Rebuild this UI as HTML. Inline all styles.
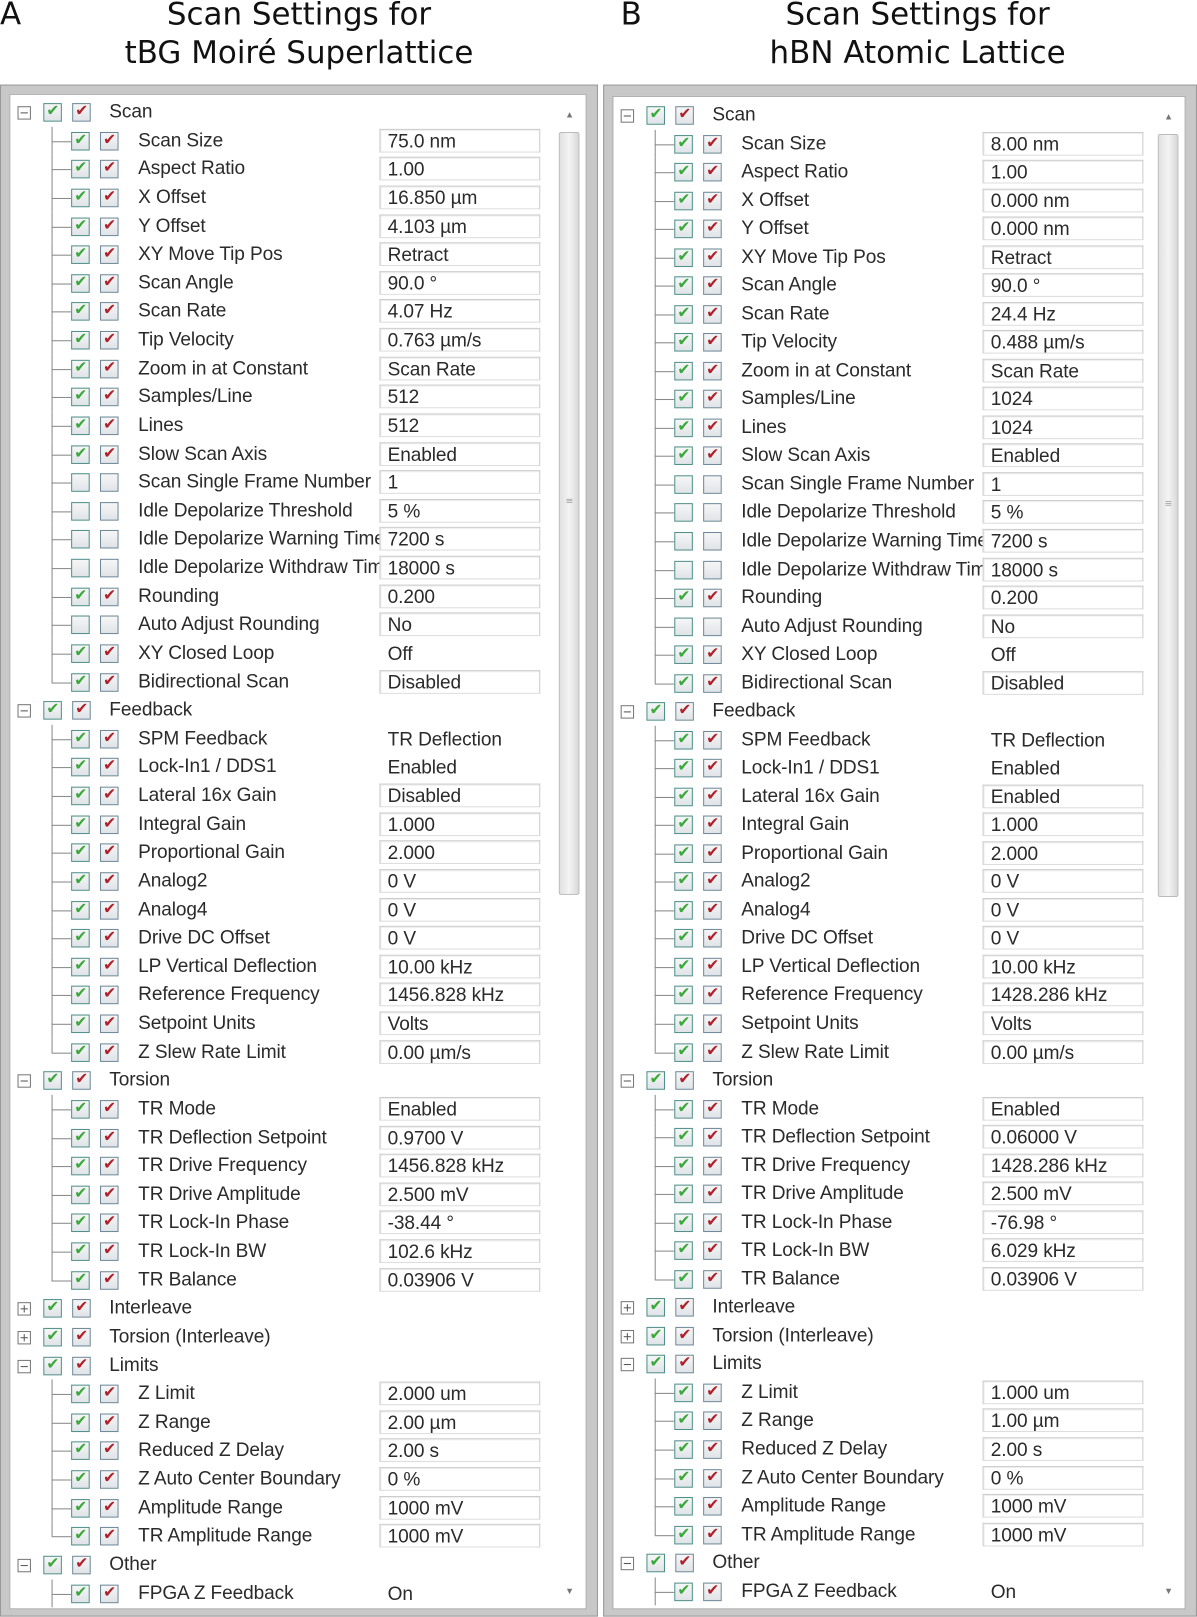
<!DOCTYPE html>
<html><head><meta charset="utf-8"><style>
*{margin:0;padding:0;box-sizing:border-box}
body{width:1197px;height:1616px;background:#fff;overflow:hidden;position:relative}
#w{position:absolute;left:0;top:0;width:1161px;height:1568px;transform:scale(1.031);transform-origin:0 0}
.h{position:absolute;font-family:"DejaVu Sans",sans-serif;font-size:30px;color:#111;text-align:center;line-height:37px}
.p{position:absolute;top:82px;height:1486px;background:#c8c8c8;border:1px solid #999}
.in{position:absolute;left:8px;top:8px;right:10px;bottom:6px;background:#fff;border:1px solid #aaa;overflow:hidden}
.sb{position:absolute;right:4px;top:8px;width:24px;bottom:8px}
.th{position:absolute;left:2px;right:2px;top:28px;height:740px;background:linear-gradient(90deg,#e0e0e0,#f4f4f4,#d8d8d8);border:1px solid #bbb;border-radius:2px}
.th::after{content:"≡";position:absolute;left:6px;top:350px;font-size:12px;color:#888}
.ar{position:absolute;left:8px;font-size:9px;color:#777}
.rows{position:absolute;left:0;top:3px;width:100%}
.r{position:relative;height:27.63px;font-family:"Liberation Sans",sans-serif;font-size:18.5px;letter-spacing:-0.1px;color:#2a2a2a;white-space:nowrap}
.B .r{height:27.54px}
.r b{position:absolute;top:5px;width:18px;height:18px;border:1px solid #6f8898;background:linear-gradient(#f6f6f6,#e0e4e8)}
.r b.on::after{content:"✔";position:absolute;left:2px;top:-3px;font-size:15px;font-weight:bold;font-family:"DejaVu Sans",sans-serif;letter-spacing:0}
.r b.g{border-color:#4f8f8a}
.r b.g.on::after{color:#3aa83a}.r b.k.on::after{color:#b0202a}
.r span{position:absolute;top:2px;overflow:hidden}
.g0 .x{position:absolute;left:7px;top:8px;width:13px;height:13px;border:1px solid #777;font-size:0}
.g0 .x::before{content:"";position:absolute;left:2px;right:2px;top:5px;height:1px;background:#555}
.g0 .x.pl::after{content:"";position:absolute;top:2px;bottom:2px;left:5px;width:1px;background:#555}
.g0 .g{left:32px}.g0 .k{left:60px}.g0 span{left:96px}
.c .g{left:59px}.c .k{left:87px}.c span{left:124px;width:234px}
.c::before{content:"";position:absolute;left:40px;top:0;height:100%;border-left:1px solid #888}
.c.l::before{height:14px}
.c::after{content:"";position:absolute;left:40px;top:14px;width:19px;border-top:1px solid #888}
.c em{position:absolute;left:358px;top:2px;width:156px;height:23px;border:1px solid #ccc;border-bottom-color:#ddd;font-style:normal;padding-left:7px;line-height:21px;box-shadow:inset 1px 1px 0 #eee}
.c em.n{border-color:transparent;box-shadow:none}
</style></head><body><div id="w">
<div class="h" style="left:0;top:-4px;text-align:left">A</div>
<div class="h" style="left:40px;top:-4px;width:500px">Scan Settings for<br>tBG Moiré Superlattice</div>
<div class="h" style="left:602px;top:-4px;text-align:left">B</div>
<div class="h" style="left:640px;top:-4px;width:500px">Scan Settings for<br>hBN Atomic Lattice</div>

<div class="p" style="left:0;width:580px"><div class="in">
<div class="rows">
<div class="r g0"><i class="x"></i><b class="g on"></b><b class="k on"></b><span>Scan</span></div>
<div class="r c"><b class="g on"></b><b class="k on"></b><span>Scan Size</span><em>75.0 nm</em></div>
<div class="r c"><b class="g on"></b><b class="k on"></b><span>Aspect Ratio</span><em>1.00</em></div>
<div class="r c"><b class="g on"></b><b class="k on"></b><span>X Offset</span><em>16.850 µm</em></div>
<div class="r c"><b class="g on"></b><b class="k on"></b><span>Y Offset</span><em>4.103 µm</em></div>
<div class="r c"><b class="g on"></b><b class="k on"></b><span>XY Move Tip Pos</span><em>Retract</em></div>
<div class="r c"><b class="g on"></b><b class="k on"></b><span>Scan Angle</span><em>90.0 °</em></div>
<div class="r c"><b class="g on"></b><b class="k on"></b><span>Scan Rate</span><em>4.07 Hz</em></div>
<div class="r c"><b class="g on"></b><b class="k on"></b><span>Tip Velocity</span><em>0.763 µm/s</em></div>
<div class="r c"><b class="g on"></b><b class="k on"></b><span>Zoom in at Constant</span><em>Scan Rate</em></div>
<div class="r c"><b class="g on"></b><b class="k on"></b><span>Samples/Line</span><em>512</em></div>
<div class="r c"><b class="g on"></b><b class="k on"></b><span>Lines</span><em>512</em></div>
<div class="r c"><b class="g on"></b><b class="k on"></b><span>Slow Scan Axis</span><em>Enabled</em></div>
<div class="r c"><b class="g"></b><b class="k"></b><span>Scan Single Frame Number</span><em>1</em></div>
<div class="r c"><b class="g"></b><b class="k"></b><span>Idle Depolarize Threshold</span><em>5 %</em></div>
<div class="r c"><b class="g"></b><b class="k"></b><span>Idle Depolarize Warning Time</span><em>7200 s</em></div>
<div class="r c"><b class="g"></b><b class="k"></b><span>Idle Depolarize Withdraw Time</span><em>18000 s</em></div>
<div class="r c"><b class="g on"></b><b class="k on"></b><span>Rounding</span><em>0.200</em></div>
<div class="r c"><b class="g"></b><b class="k"></b><span>Auto Adjust Rounding</span><em>No</em></div>
<div class="r c"><b class="g on"></b><b class="k on"></b><span>XY Closed Loop</span><em class="n">Off</em></div>
<div class="r c l"><b class="g on"></b><b class="k on"></b><span>Bidirectional Scan</span><em>Disabled</em></div>
<div class="r g0"><i class="x"></i><b class="g on"></b><b class="k on"></b><span>Feedback</span></div>
<div class="r c"><b class="g on"></b><b class="k on"></b><span>SPM Feedback</span><em class="n">TR Deflection</em></div>
<div class="r c"><b class="g on"></b><b class="k on"></b><span>Lock-In1 / DDS1</span><em class="n">Enabled</em></div>
<div class="r c"><b class="g on"></b><b class="k on"></b><span>Lateral 16x Gain</span><em>Disabled</em></div>
<div class="r c"><b class="g on"></b><b class="k on"></b><span>Integral Gain</span><em>1.000</em></div>
<div class="r c"><b class="g on"></b><b class="k on"></b><span>Proportional Gain</span><em>2.000</em></div>
<div class="r c"><b class="g on"></b><b class="k on"></b><span>Analog2</span><em>0 V</em></div>
<div class="r c"><b class="g on"></b><b class="k on"></b><span>Analog4</span><em>0 V</em></div>
<div class="r c"><b class="g on"></b><b class="k on"></b><span>Drive DC Offset</span><em>0 V</em></div>
<div class="r c"><b class="g on"></b><b class="k on"></b><span>LP Vertical Deflection</span><em>10.00 kHz</em></div>
<div class="r c"><b class="g on"></b><b class="k on"></b><span>Reference Frequency</span><em>1456.828 kHz</em></div>
<div class="r c"><b class="g on"></b><b class="k on"></b><span>Setpoint Units</span><em>Volts</em></div>
<div class="r c l"><b class="g on"></b><b class="k on"></b><span>Z Slew Rate Limit</span><em>0.00 µm/s</em></div>
<div class="r g0"><i class="x"></i><b class="g on"></b><b class="k on"></b><span>Torsion</span></div>
<div class="r c"><b class="g on"></b><b class="k on"></b><span>TR Mode</span><em>Enabled</em></div>
<div class="r c"><b class="g on"></b><b class="k on"></b><span>TR Deflection Setpoint</span><em>0.9700 V</em></div>
<div class="r c"><b class="g on"></b><b class="k on"></b><span>TR Drive Frequency</span><em>1456.828 kHz</em></div>
<div class="r c"><b class="g on"></b><b class="k on"></b><span>TR Drive Amplitude</span><em>2.500 mV</em></div>
<div class="r c"><b class="g on"></b><b class="k on"></b><span>TR Lock-In Phase</span><em>-38.44 °</em></div>
<div class="r c"><b class="g on"></b><b class="k on"></b><span>TR Lock-In BW</span><em>102.6 kHz</em></div>
<div class="r c l"><b class="g on"></b><b class="k on"></b><span>TR Balance</span><em>0.03906 V</em></div>
<div class="r g0"><i class="x pl"></i><b class="g on"></b><b class="k on"></b><span>Interleave</span></div>
<div class="r g0"><i class="x pl"></i><b class="g on"></b><b class="k on"></b><span>Torsion (Interleave)</span></div>
<div class="r g0"><i class="x"></i><b class="g on"></b><b class="k on"></b><span>Limits</span></div>
<div class="r c"><b class="g on"></b><b class="k on"></b><span>Z Limit</span><em>2.000 um</em></div>
<div class="r c"><b class="g on"></b><b class="k on"></b><span>Z Range</span><em>2.00 µm</em></div>
<div class="r c"><b class="g on"></b><b class="k on"></b><span>Reduced Z Delay</span><em>2.00 s</em></div>
<div class="r c"><b class="g on"></b><b class="k on"></b><span>Z Auto Center Boundary</span><em>0 %</em></div>
<div class="r c"><b class="g on"></b><b class="k on"></b><span>Amplitude Range</span><em>1000 mV</em></div>
<div class="r c l"><b class="g on"></b><b class="k on"></b><span>TR Amplitude Range</span><em>1000 mV</em></div>
<div class="r g0"><i class="x"></i><b class="g on"></b><b class="k on"></b><span>Other</span></div>
<div class="r c"><b class="g on"></b><b class="k on"></b><span>FPGA Z Feedback</span><em class="n">On</em></div>
</div>
<div class="sb"><div class="ar" style="top:6px">▲</div><div class="th"></div><div class="ar" style="bottom:4px">▼</div></div>
</div></div>

<div class="p B" style="left:585px;width:576px"><div class="in" style="top:10px">
<div class="rows" style="top:4px">
<div class="r g0"><i class="x"></i><b class="g on"></b><b class="k on"></b><span>Scan</span></div>
<div class="r c"><b class="g on"></b><b class="k on"></b><span>Scan Size</span><em>8.00 nm</em></div>
<div class="r c"><b class="g on"></b><b class="k on"></b><span>Aspect Ratio</span><em>1.00</em></div>
<div class="r c"><b class="g on"></b><b class="k on"></b><span>X Offset</span><em>0.000 nm</em></div>
<div class="r c"><b class="g on"></b><b class="k on"></b><span>Y Offset</span><em>0.000 nm</em></div>
<div class="r c"><b class="g on"></b><b class="k on"></b><span>XY Move Tip Pos</span><em>Retract</em></div>
<div class="r c"><b class="g on"></b><b class="k on"></b><span>Scan Angle</span><em>90.0 °</em></div>
<div class="r c"><b class="g on"></b><b class="k on"></b><span>Scan Rate</span><em>24.4 Hz</em></div>
<div class="r c"><b class="g on"></b><b class="k on"></b><span>Tip Velocity</span><em>0.488 µm/s</em></div>
<div class="r c"><b class="g on"></b><b class="k on"></b><span>Zoom in at Constant</span><em>Scan Rate</em></div>
<div class="r c"><b class="g on"></b><b class="k on"></b><span>Samples/Line</span><em>1024</em></div>
<div class="r c"><b class="g on"></b><b class="k on"></b><span>Lines</span><em>1024</em></div>
<div class="r c"><b class="g on"></b><b class="k on"></b><span>Slow Scan Axis</span><em>Enabled</em></div>
<div class="r c"><b class="g"></b><b class="k"></b><span>Scan Single Frame Number</span><em>1</em></div>
<div class="r c"><b class="g"></b><b class="k"></b><span>Idle Depolarize Threshold</span><em>5 %</em></div>
<div class="r c"><b class="g"></b><b class="k"></b><span>Idle Depolarize Warning Time</span><em>7200 s</em></div>
<div class="r c"><b class="g"></b><b class="k"></b><span>Idle Depolarize Withdraw Time</span><em>18000 s</em></div>
<div class="r c"><b class="g on"></b><b class="k on"></b><span>Rounding</span><em>0.200</em></div>
<div class="r c"><b class="g"></b><b class="k"></b><span>Auto Adjust Rounding</span><em>No</em></div>
<div class="r c"><b class="g on"></b><b class="k on"></b><span>XY Closed Loop</span><em class="n">Off</em></div>
<div class="r c l"><b class="g on"></b><b class="k on"></b><span>Bidirectional Scan</span><em>Disabled</em></div>
<div class="r g0"><i class="x"></i><b class="g on"></b><b class="k on"></b><span>Feedback</span></div>
<div class="r c"><b class="g on"></b><b class="k on"></b><span>SPM Feedback</span><em class="n">TR Deflection</em></div>
<div class="r c"><b class="g on"></b><b class="k on"></b><span>Lock-In1 / DDS1</span><em class="n">Enabled</em></div>
<div class="r c"><b class="g on"></b><b class="k on"></b><span>Lateral 16x Gain</span><em>Enabled</em></div>
<div class="r c"><b class="g on"></b><b class="k on"></b><span>Integral Gain</span><em>1.000</em></div>
<div class="r c"><b class="g on"></b><b class="k on"></b><span>Proportional Gain</span><em>2.000</em></div>
<div class="r c"><b class="g on"></b><b class="k on"></b><span>Analog2</span><em>0 V</em></div>
<div class="r c"><b class="g on"></b><b class="k on"></b><span>Analog4</span><em>0 V</em></div>
<div class="r c"><b class="g on"></b><b class="k on"></b><span>Drive DC Offset</span><em>0 V</em></div>
<div class="r c"><b class="g on"></b><b class="k on"></b><span>LP Vertical Deflection</span><em>10.00 kHz</em></div>
<div class="r c"><b class="g on"></b><b class="k on"></b><span>Reference Frequency</span><em>1428.286 kHz</em></div>
<div class="r c"><b class="g on"></b><b class="k on"></b><span>Setpoint Units</span><em>Volts</em></div>
<div class="r c l"><b class="g on"></b><b class="k on"></b><span>Z Slew Rate Limit</span><em>0.00 µm/s</em></div>
<div class="r g0"><i class="x"></i><b class="g on"></b><b class="k on"></b><span>Torsion</span></div>
<div class="r c"><b class="g on"></b><b class="k on"></b><span>TR Mode</span><em>Enabled</em></div>
<div class="r c"><b class="g on"></b><b class="k on"></b><span>TR Deflection Setpoint</span><em>0.06000 V</em></div>
<div class="r c"><b class="g on"></b><b class="k on"></b><span>TR Drive Frequency</span><em>1428.286 kHz</em></div>
<div class="r c"><b class="g on"></b><b class="k on"></b><span>TR Drive Amplitude</span><em>2.500 mV</em></div>
<div class="r c"><b class="g on"></b><b class="k on"></b><span>TR Lock-In Phase</span><em>-76.98 °</em></div>
<div class="r c"><b class="g on"></b><b class="k on"></b><span>TR Lock-In BW</span><em>6.029 kHz</em></div>
<div class="r c l"><b class="g on"></b><b class="k on"></b><span>TR Balance</span><em>0.03906 V</em></div>
<div class="r g0"><i class="x pl"></i><b class="g on"></b><b class="k on"></b><span>Interleave</span></div>
<div class="r g0"><i class="x pl"></i><b class="g on"></b><b class="k on"></b><span>Torsion (Interleave)</span></div>
<div class="r g0"><i class="x"></i><b class="g on"></b><b class="k on"></b><span>Limits</span></div>
<div class="r c"><b class="g on"></b><b class="k on"></b><span>Z Limit</span><em>1.000 um</em></div>
<div class="r c"><b class="g on"></b><b class="k on"></b><span>Z Range</span><em>1.00 µm</em></div>
<div class="r c"><b class="g on"></b><b class="k on"></b><span>Reduced Z Delay</span><em>2.00 s</em></div>
<div class="r c"><b class="g on"></b><b class="k on"></b><span>Z Auto Center Boundary</span><em>0 %</em></div>
<div class="r c"><b class="g on"></b><b class="k on"></b><span>Amplitude Range</span><em>1000 mV</em></div>
<div class="r c l"><b class="g on"></b><b class="k on"></b><span>TR Amplitude Range</span><em>1000 mV</em></div>
<div class="r g0"><i class="x"></i><b class="g on"></b><b class="k on"></b><span>Other</span></div>
<div class="r c"><b class="g on"></b><b class="k on"></b><span>FPGA Z Feedback</span><em class="n">On</em></div>
</div>
<div class="sb"><div class="ar" style="top:6px">▲</div><div class="th"></div><div class="ar" style="bottom:4px">▼</div></div>
</div></div>
</div></body></html>
